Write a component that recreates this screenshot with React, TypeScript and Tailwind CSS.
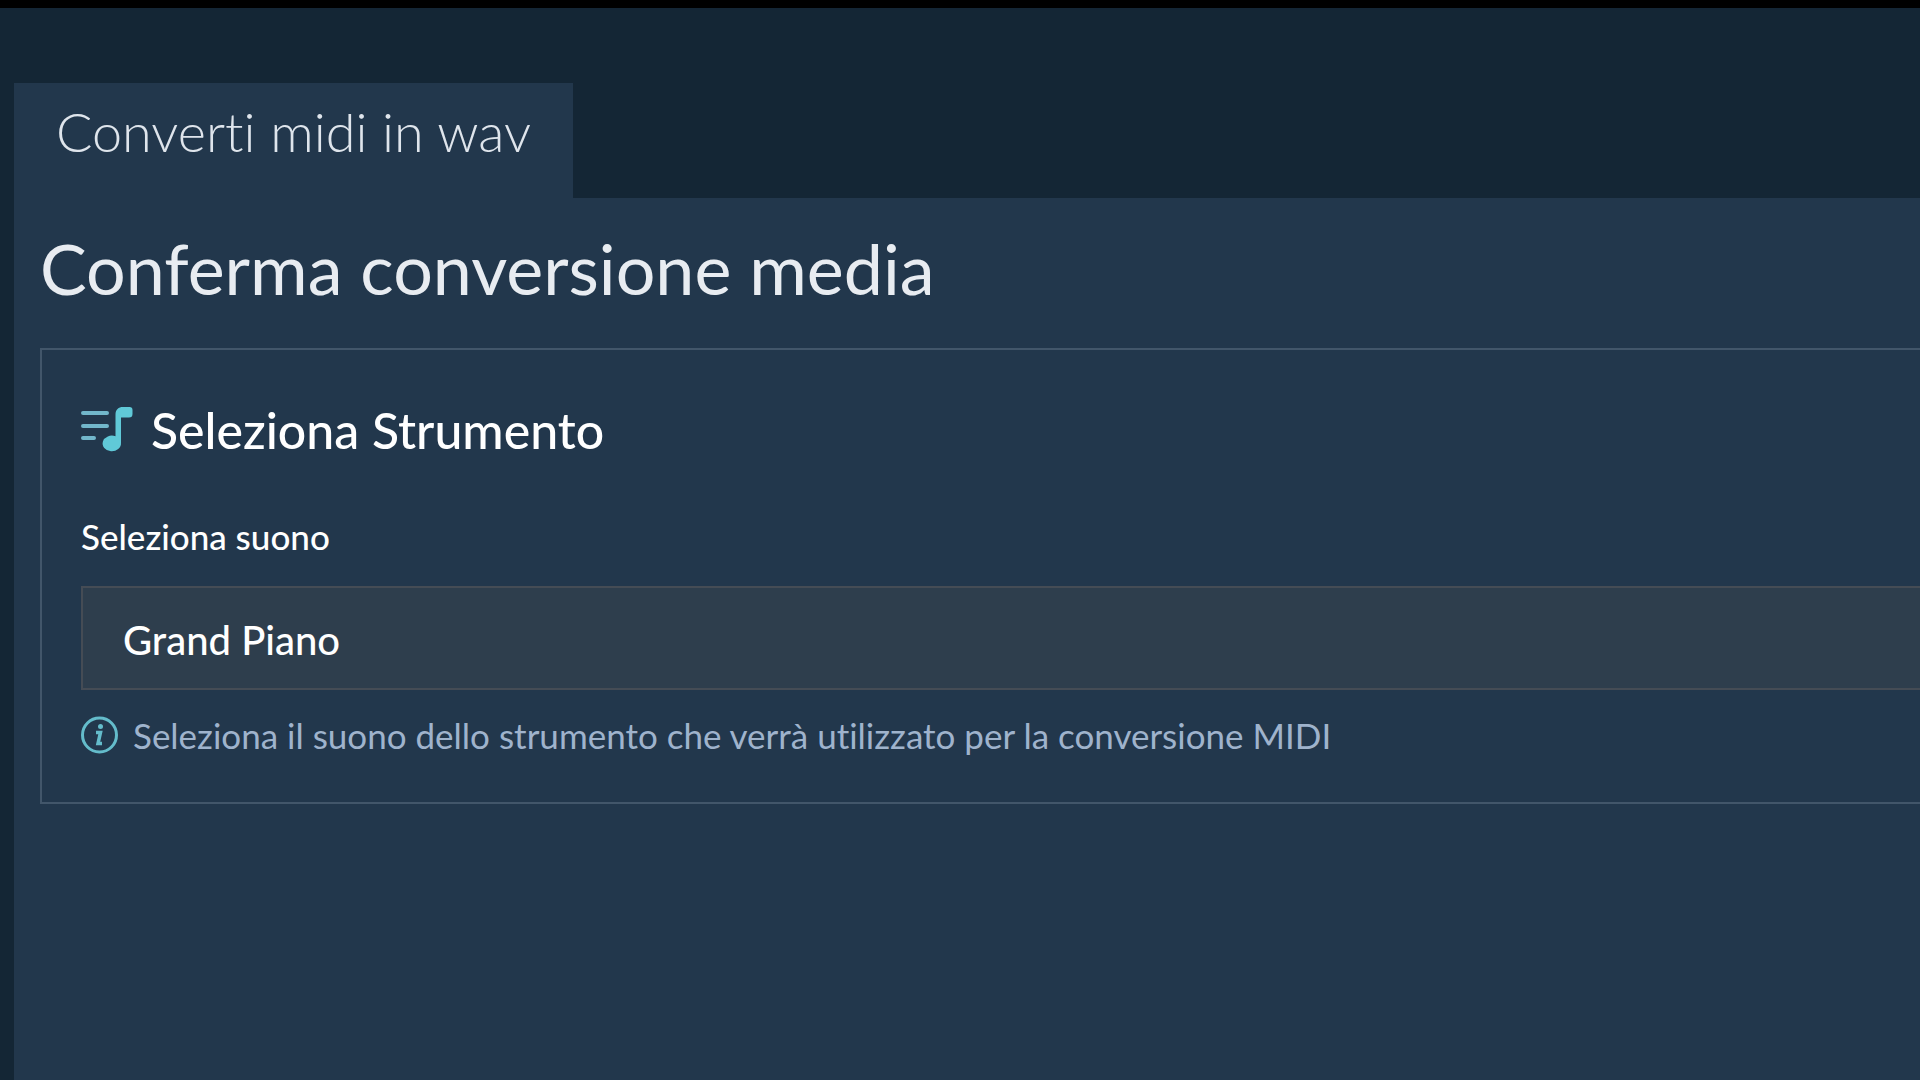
import { useState } from "react";

const SOUNDS = ["Grand Piano", "Bright Piano", "Honky-tonk Piano", "Electric Piano"];

const MusicIcon = () => (
  <svg viewBox="0 0 52 46" className="h-[46px] w-[52px] shrink-0" fill="none" aria-hidden="true">
    <path d="M2 6h24M2 19h24M2 31h11" stroke="#72b7cb" strokeWidth="4" strokeLinecap="round" />
    <path
      d="M34.5 7.500C34.5 2.500 37.500 0 42 0H48.500Q51.500 0 51.500 3V7Q51.500 10.500 48 10.500H40V36A9.200 7.800 0 1 1 34.500 29.300Z"
      fill="#60c9d8"
    />
  </svg>
);

const InfoIcon = () => (
  <svg viewBox="0 0 38 38" className="h-[38px] w-[38px] shrink-0 text-[#64bccb]" fill="none" stroke="currentColor" aria-hidden="true">
    <circle cx="18.500" cy="19" r="17" strokeWidth="3" />
    <path d="M15 16.500h4.500l-2.500 11h4" strokeWidth="3.500" />
    <circle cx="19.500" cy="10.500" r="2.500" fill="currentColor" stroke="none" />
  </svg>
);

export default function App() {
  const [sound, setSound] = useState(SOUNDS[0]);

  return (
    <div className="flex min-h-screen flex-col overflow-hidden border-t-8 border-black bg-[#142635] pt-[75px] pl-[14px] font-['Lato',sans-serif] [font-variant-ligatures:none]">
      <nav className="flex">
        <a
          href="#convert"
          className="bg-[#22374c] px-[42px] pt-[17px] pb-[34px] text-[54px] leading-[64px] font-light whitespace-nowrap text-[#dfe5ec]"
        >
          Converti midi in wav
        </a>
      </nav>
      <main className="flex-1 bg-[#22374c] pl-[26px] pt-[34px]">
        <h1 className="text-[70px] leading-[72px] text-[#e8ecf1]">Conferma conversione media</h1>
        <section className="mt-11 border-2 border-r-0 border-[#42566a] pt-12 pb-[45px] pl-[39px]">
          <h2 className="flex items-center gap-[18px] text-[50px] leading-[64px] font-medium text-white">
            <MusicIcon />
            Seleziona Strumento
          </h2>
          <label htmlFor="sound" className="mt-[52px] block text-[35px] leading-[44px] font-medium text-white">
            Seleziona suono
          </label>
          <select
            id="sound"
            value={sound}
            onChange={(e) => setSound(e.target.value)}
            className="mt-7 block h-[104px] w-full appearance-none border-2 border-r-0 border-[#454c55] bg-[#2e3e4d] px-10 pt-1 text-[40px] font-medium text-white"
          >
            {SOUNDS.map((name) => (
              <option key={name}>{name}</option>
            ))}
          </select>
          <p className="mt-[23px] flex items-center gap-[14px] text-[35px] leading-[44px] text-[#9fb3cc]">
            <InfoIcon />
            Seleziona il suono dello strumento che verrà utilizzato per la conversione MIDI
          </p>
        </section>
      </main>
    </div>
  );
}
